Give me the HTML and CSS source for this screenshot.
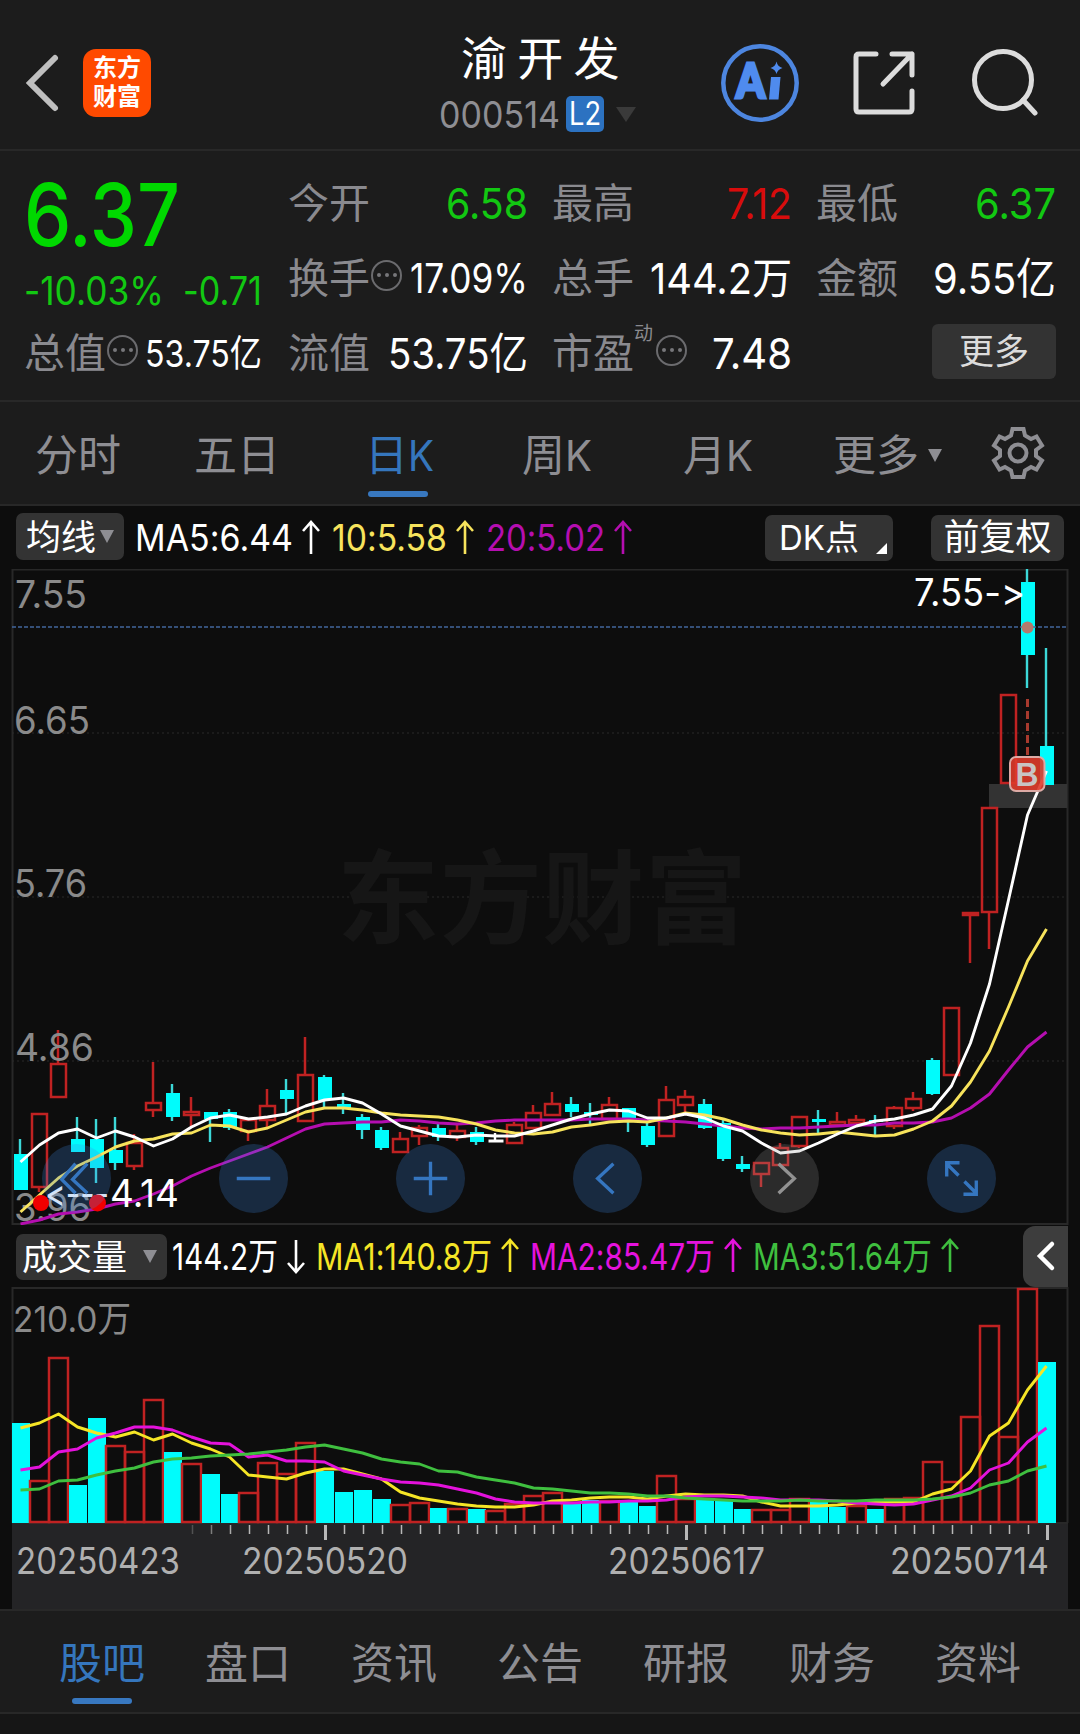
FILE: index.html
```html
<!DOCTYPE html>
<html lang="zh-CN">
    <head>
        <meta charset="UTF-8" />
        <meta name="viewport" content="width=device-width, initial-scale=1.0" />
        <title>渝开发 000514</title>
        <link rel="stylesheet" href="styles.css">
    </head>
    <body>
        <header class="header">
            <svg class="back" width="36" height="60" viewBox="0 0 36 60">
                <path d="M31 5L6 30L31 55" />
            </svg>
            <div class="logo">东方<br>财富</div>
            <div class="stock">
                <h1>渝 开 发</h1>
                <div class="code">
                    <span data-w="121">000514</span>
                    <b class="l2"><span data-w="32">L2</span></b>
                    <i class="caret"></i>
                </div>
            </div>
            <div class="tools">
                <svg class="ai" width="80" height="80" viewBox="0 0 80 80">
                    <circle cx="40" cy="40" r="36.7" />
                    <text x="16" y="54.5" textLength="29" lengthAdjust="spacingAndGlyphs">A</text>
                    <path d="M51 34H60.500L58.500 56.500H49Z" />
                    <path d="M56.500 18.500Q57.500 23.500 62.500 25Q57.500 26.500 56.500 31Q55.500 26.500 50.500 25Q55.500 23.500 56.500 18.500Z" />
                </svg>
                <svg class="line" width="66" height="68" viewBox="0 0 66 68">
                    <path d="M24 5H7Q4 5 4 8V60Q4 63 7 63H57Q60 63 60 60V42M40 5H60V26M60 5L31 35" />
                </svg>
                <svg class="line" width="68" height="68" viewBox="0 0 68 68">
                    <circle cx="33" cy="31" r="28.500" />
                    <path d="M53 51L65 64" />
                </svg>
            </div>
        </header>

        <section class="quote">
            <div class="price"><span data-w="156">6.37</span></div>
            <div class="change">
                <span data-w="140">-10.03%</span>
                <span data-w="79">-0.71</span>
            </div>
            <div class="cell total"><label>总值</label><i class="tip"></i><span class="small" data-w="117">53.75亿</span></div>

            <div class="cell c2"><label>今开</label><span class="down" data-w="82">6.58</span></div>
            <div class="cell c3"><label>最高</label><span class="up" data-w="65">7.12</span></div>
            <div class="cell c4"><label>最低</label><span class="down" data-w="81">6.37</span></div>

            <div class="cell c2 r2"><label>换手</label><i class="tip"></i><span class="mid" data-w="118">17.09%</span></div>
            <div class="cell c3 r2"><label>总手</label><span data-w="142">144.2万</span></div>
            <div class="cell c4 r2"><label>金额</label><span data-w="123">9.55亿</span></div>

            <div class="cell c2 r3"><label>流值</label><span data-w="140">53.75亿</span></div>
            <div class="cell c3 r3"><label>市盈</label><sup>动</sup><i class="tip"></i><span data-w="80">7.48</span></div>
            <div class="cell c4 r3"><button class="more">更多</button></div>
        </section>

        <nav class="period">
            <a>分时</a>
            <a>五日</a>
            <a class="active">日<span data-w="26">K</span></a>
            <a>周<span data-w="27">K</span></a>
            <a>月<span data-w="27">K</span></a>
            <a>更多<i class="caret"></i></a>
            <svg class="gear" width="56" height="56" viewBox="-28 -28 56 56">
                <path d="M-5.500-24H5.500L7-17.500 13-14 18.500-16.500 24-7.500 18-3V3L24 7.500 18.500 16.500 13 14 7 17.500 5.500 24H-5.500L-7 17.500-13 14-18.500 16.500-24 7.500-18 3V-3L-24-7.500-18.500-16.500-13-14-7-17.500Z" />
                <circle r="8.500" />
            </svg>
        </nav>

        <div class="legend">
            <button class="pick">均线<i class="caret"></i></button>
            <span class="white" data-w="158">MA5:6.44</span>
            <svg class="arrow white"><path d="M10 35V3M2 12L10 3L18 12" /></svg>
            <span class="yellow" data-w="115">10:5.58</span>
            <svg class="arrow yellow"><path d="M10 35V3M2 12L10 3L18 12" /></svg>
            <span class="purple" data-w="119">20:5.02</span>
            <svg class="arrow purple"><path d="M10 35V3M2 12L10 3L18 12" /></svg>
            <button class="dk"><span data-w="46">DK</span>点</button>
            <button class="fq">前复权</button>
        </div>

        <div class="kline">
            <svg id="kline" width="1080" height="656" viewBox="0 569 1080 656">
                <g class="grid">
                    <path class="frame" d="M12.500 569V1225M1067.500 569V1225M12 569.500H1068M12 1224H1068" />
                    <path class="dots" d="M12 733H1068M12 897H1068M12 1061H1068" />
                </g>
                <text class="watermark" x="337" y="936" textLength="410">东方财富</text>
                <rect class="gap" x="989" y="784" width="78" height="24" />
                <g id="candles"></g>
                <g class="axis">
                    <text x="15" y="608" textLength="72" lengthAdjust="spacingAndGlyphs">7.55</text>
                    <text x="14" y="734" textLength="76" lengthAdjust="spacingAndGlyphs">6.65</text>
                    <text x="14" y="897" textLength="73" lengthAdjust="spacingAndGlyphs">5.76</text>
                    <text x="15" y="1061" textLength="79" lengthAdjust="spacingAndGlyphs">4.86</text>
                    <text x="14" y="1221" textLength="77" lengthAdjust="spacingAndGlyphs">3.96</text>
                </g>
                <g id="ma"></g>
                <path class="last" d="M12 627H1068" />
                <g class="mark">
                    <text x="914" y="606" textLength="111" lengthAdjust="spacingAndGlyphs">7.55-&gt;</text>
                    <text x="45" y="1207" textLength="64" lengthAdjust="spacingAndGlyphs">&lt;---</text>
                    <text x="110" y="1207" textLength="69" lengthAdjust="spacingAndGlyphs">4.14</text>
                </g>
                <circle class="red-dot" cx="41" cy="1203" r="8" />
                <circle class="red-dot" cx="97.500" cy="1203" r="8.500" />
                <circle class="pos" cx="1027.500" cy="627.500" r="6" />
                <path class="buy-line" d="M1027.500 699V757" />
                <rect class="buy" x="1010" y="757" width="34.500" height="34" rx="6" />
                <text class="buy-text" x="1015.500" y="786" textLength="23" lengthAdjust="spacingAndGlyphs">B</text>
            </svg>
            <div class="controls">
                <button><svg viewBox="-35 -35 70 70"><path d="M-1-15L-15 1L-1 15M11-15L-4 1L11 15" /></svg></button>
                <button><svg viewBox="-35 -35 70 70"><path d="M-17 0H17" /></svg></button>
                <button><svg viewBox="-35 -35 70 70"><path d="M-17 0H17M0-17V17" /></svg></button>
                <button><svg viewBox="-35 -35 70 70"><path d="M6-15L-10 0L6 15" /></svg></button>
                <button class="off"><svg viewBox="-35 -35 70 70"><path d="M-6-15L10 0L-6 15" /></svg></button>
                <button><svg viewBox="-35 -35 70 70"><path d="M-2-16H-15V-2M-15-15L-3-3M2 16H15V2M15 15L3 3" /></svg></button>
            </div>
        </div>

        <div class="legend vol">
            <button class="pick">成交量<i class="caret"></i></button>
            <span class="white" data-w="106">144.2万</span>
            <svg class="arrow white"><path d="M10 3V35M2 26L10 35L18 26" /></svg>
            <span class="bright" data-w="176">MA1:140.8万</span>
            <svg class="arrow bright"><path d="M10 35V3M2 12L10 3L18 12" /></svg>
            <span class="pink" data-w="185">MA2:85.47万</span>
            <svg class="arrow pink"><path d="M10 35V3M2 12L10 3L18 12" /></svg>
            <span class="green" data-w="179">MA3:51.64万</span>
            <svg class="arrow green"><path d="M10 35V3M2 12L10 3L18 12" /></svg>
            <button class="drawer"><svg width="20" height="32" viewBox="0 0 20 32"><path d="M16 4L4 16L16 28" /></svg></button>
        </div>

        <svg id="volume" class="volume" width="1080" height="322" viewBox="0 1287 1080 322">
            <rect class="strip" x="12" y="1524" width="1056" height="85" />
            <path class="frame" d="M12.500 1287V1523M1067.500 1287V1523M12 1288H1068M12 1523H1068" />
            <g class="axis">
                <text x="13" y="1332" textLength="118" lengthAdjust="spacingAndGlyphs">210.0万</text>
            </g>
            <g id="bars"></g>
            <g id="volMa"></g>
            <g id="ticks"></g>
            <g class="dates">
                <text x="16" y="1574" textLength="164" lengthAdjust="spacingAndGlyphs">20250423</text>
                <text x="242" y="1574" textLength="166" lengthAdjust="spacingAndGlyphs">20250520</text>
                <text x="608" y="1574" textLength="157" lengthAdjust="spacingAndGlyphs">20250617</text>
                <text x="890" y="1574" textLength="159" lengthAdjust="spacingAndGlyphs">20250714</text>
            </g>
        </svg>

        <nav class="bottom">
            <a class="active">股吧</a>
            <a>盘口</a>
            <a>资讯</a>
            <a>公告</a>
            <a>研报</a>
            <a>财务</a>
            <a>资料</a>
        </nav>

        <script>
            var STEP = 19
            var X0 = 21

            // 涨跌, 最高, 实体上沿, 实体下沿, 最低, 成交量上沿, 量柱颜色(与K线不同时)
            var days = [
                ['d', 1139, 1154, 1190, 1190, 1423], ['u', 1113, 1113, 1188, 1192, 1480],
                ['u', 1030, 1063, 1098, 1098, 1357], ['d', 1117, 1139, 1152, 1152, 1485],
                ['d', 1119, 1139, 1168, 1183, 1418], ['d', 1117, 1150, 1163, 1170, 1445, 'u'],
                ['u', 1134, 1142, 1167, 1170, 1451], ['u', 1062, 1102, 1111, 1117, 1399],
                ['d', 1084, 1093, 1117, 1121, 1452], ['u', 1097, 1111, 1116, 1126, 1463],
                ['d', 1112, 1112, 1119, 1142, 1474], ['d', 1109, 1112, 1128, 1130, 1494],
                ['u', 1119, 1119, 1132, 1141, 1492], ['u', 1089, 1105, 1121, 1127, 1462],
                ['d', 1079, 1090, 1099, 1113, 1473, 'u'], ['u', 1037, 1074, 1122, 1122, 1442],
                ['d', 1075, 1077, 1100, 1108, 1471], ['d', 1093, 1104, 1108, 1114, 1492],
                ['d', 1114, 1117, 1130, 1139, 1490], ['d', 1127, 1130, 1148, 1150, 1499],
                ['u', 1132, 1138, 1153, 1153, 1504], ['u', 1125, 1127, 1137, 1145, 1502],
                ['d', 1124, 1128, 1137, 1141, 1508], ['u', 1125, 1130, 1138, 1141, 1508],
                ['d', 1127, 1132, 1142, 1145, 1509], ['e', 1133, 1140, 1142, 1142, 1510],
                ['u', 1122, 1124, 1144, 1144, 1503], ['u', 1105, 1112, 1129, 1129, 1495],
                ['u', 1092, 1103, 1116, 1116, 1492], ['d', 1097, 1104, 1112, 1117, 1504],
                ['d', 1103, 1112, 1115, 1125, 1500], ['u', 1097, 1104, 1120, 1120, 1500],
                ['d', 1108, 1108, 1120, 1132, 1501], ['d', 1122, 1126, 1145, 1147, 1506],
                ['u', 1086, 1099, 1137, 1137, 1475], ['u', 1090, 1096, 1106, 1113, 1498],
                ['d', 1099, 1104, 1128, 1129, 1500], ['d', 1120, 1123, 1159, 1161, 1501],
                ['d', 1156, 1164, 1169, 1172, 1509], ['u', 1162, 1162, 1175, 1187, 1509],
                ['u', 1143, 1147, 1166, 1166, 1509], ['u', 1116, 1116, 1147, 1148, 1498],
                ['d', 1110, 1119, 1122, 1133, 1502], ['u', 1112, 1121, 1126, 1126, 1507, 'd'],
                ['u', 1115, 1119, 1124, 1126, 1505], ['d', 1115, 1120, 1122, 1136, 1509],
                ['u', 1106, 1107, 1127, 1129, 1498], ['u', 1092, 1098, 1109, 1111, 1497],
                ['d', 1058, 1060, 1094, 1095, 1461, 'u'], ['u', 1007, 1007, 1076, 1076, 1481],
                ['u', 912, 912, 916, 963, 1416], ['u', 807, 807, 913, 949, 1325],
                ['u', 694, 694, 784, 784, 1436], ['d', 569, 582, 655, 688, 1288, 'u'],
                ['d', 648, 746, 785, 785, 1362]
            ]

            var ma = {
                purple: [1224, 1220, 1214, 1212, 1209, 1204, 1201, 1194, 1186, 1176, 1168, 1161, 1154, 1147, 1138, 1129, 1124, 1123, 1122, 1122, 1120, 1121, 1123, 1124, 1123, 1121, 1120, 1120, 1120, 1120, 1119, 1119, 1119, 1120, 1121, 1122, 1124, 1126, 1128, 1129, 1128, 1128, 1127, 1126, 1125, 1125, 1123, 1123, 1122, 1118, 1108, 1094, 1070, 1047, 1032],
                yellow: [1212, 1195, 1178, 1166, 1157, 1147, 1141, 1139, 1134, 1133, 1125, 1126, 1132, 1128, 1120, 1112, 1108, 1108, 1110, 1113, 1115, 1116, 1117, 1120, 1124, 1130, 1133, 1134, 1132, 1127, 1125, 1122, 1121, 1122, 1118, 1113, 1115, 1119, 1125, 1130, 1133, 1135, 1134, 1132, 1134, 1136, 1135, 1129, 1121, 1106, 1082, 1051, 1007, 961, 929],
                white: [1162, 1145, 1133, 1129, 1138, 1131, 1137, 1146, 1139, 1127, 1118, 1115, 1119, 1117, 1114, 1106, 1100, 1098, 1103, 1114, 1126, 1131, 1136, 1137, 1135, 1136, 1136, 1131, 1125, 1119, 1114, 1110, 1111, 1118, 1118, 1114, 1118, 1126, 1131, 1143, 1153, 1151, 1143, 1134, 1126, 1121, 1119, 1115, 1109, 1086, 1043, 984, 900, 815, 771]
            }

            var volMa = {
                bright: [1428, 1423, 1414, 1427, 1433, 1437, 1432, 1440, 1434, 1443, 1449, 1457, 1475, 1477, 1479, 1473, 1469, 1469, 1474, 1479, 1492, 1498, 1501, 1504, 1506, 1507, 1507, 1505, 1501, 1500, 1498, 1497, 1497, 1499, 1496, 1494, 1495, 1495, 1496, 1502, 1506, 1506, 1506, 1505, 1503, 1502, 1502, 1502, 1494, 1489, 1471, 1436, 1423, 1390, 1366],
                pink: [1470, 1467, 1452, 1449, 1438, 1433, 1427, 1427, 1430, 1437, 1443, 1444, 1457, 1455, 1461, 1461, 1462, 1471, 1475, 1479, 1482, 1483, 1485, 1489, 1493, 1499, 1502, 1503, 1503, 1503, 1502, 1502, 1501, 1501, 1500, 1497, 1496, 1496, 1497, 1498, 1500, 1500, 1500, 1501, 1503, 1504, 1505, 1504, 1500, 1496, 1488, 1470, 1463, 1442, 1428],
                green: [1490, 1489, 1481, 1480, 1475, 1471, 1468, 1462, 1459, 1458, 1456, 1455, 1454, 1452, 1450, 1447, 1445, 1449, 1453, 1459, 1462, 1464, 1471, 1472, 1477, 1480, 1483, 1488, 1489, 1491, 1493, 1493, 1494, 1496, 1496, 1498, 1499, 1500, 1501, 1501, 1501, 1500, 1501, 1501, 1501, 1500, 1500, 1500, 1499, 1497, 1493, 1485, 1481, 1471, 1466]
            }

            function add(parent, tag, attrs) {
                var el = document.createElementNS('http://www.w3.org/2000/svg', tag)
                for (var k in attrs) {
                    el.setAttribute(k, attrs[k])
                }
                document.getElementById(parent).appendChild(el)
            }

            function drawBox(parent, dir, x, w, top, bottom) {
                // 阳线空心，阴线实心
                if (dir === 'u') {
                    add(parent, 'rect', { class: 'up', x: x - w / 2 - 1, y: top + 1, width: w + 1, height: Math.max(bottom - top - 2, 2) })
                } else {
                    add(parent, 'rect', { class: dir === 'e' ? 'even' : 'down', x: x - w / 2, y: top, width: w, height: bottom - top })
                }
            }

            function drawLines(parent, lines) {
                for (var name in lines) {
                    var pts = lines[name].map(function(y, i) {
                        return X0 - 0.5 + STEP * i + ',' + y
                    })
                    add(parent, 'polyline', { class: name, points: pts.join(' ') })
                }
            }

            days.forEach(function(d, i) {
                var x = X0 + STEP * i
                var mid = x - 1
                var cls = { u: 'up', d: 'down', e: 'even' }[d[0]]
                add('candles', 'path', { class: cls, d: 'M' + mid + ' ' + d[1] + 'V' + d[2] + 'M' + mid + ' ' + d[3] + 'V' + d[4] })
                drawBox('candles', d[0], x, 14, d[2], d[3])

                var dir = d[6] || (d[0] === 'e' ? 'u' : d[0])
                drawBox('bars', dir, x, 18, d[5], 1523)

                if (i >= 9) {
                    var major = i === 16 || i === 35 || i === 54
                    add('ticks', 'path', {
                        d: 'M' + (x + 0.5) + ' 1525V' + (major ? 1540 : 1534),
                        'stroke-width': major ? 3 : 1.5,
                        opacity: Math.min(1, (i - 8) * 0.3)
                    })
                }
            })
            drawLines('ma', ma)
            drawLines('volMa', volMa)

            // 把文字压缩到指定宽度
            document.querySelectorAll('[data-w]').forEach(function(el) {
                var w = Number(el.dataset.w)
                var full = el.getBoundingClientRect().width
                el.style.transform = 'scaleX(' + w / full + ')'
                el.style.marginRight = w - full + 'px'
            })
        </script>
    </body>
</html>
```
FILE: styles.css
```css
* {
    box-sizing: border-box;
}
body {
    margin: 0;
    width: 1080px;
    height: 1734px;
    overflow: hidden;
    background: #0d0d0d;
    color: #fff;
    font-family: Inter, "Noto Sans CJK SC", sans-serif;
    font-feature-settings: "calt" 0;
}
button {
    padding: 0;
    border: none;
    color: #fff;
    font-family: inherit;
    background: #333;
}
svg {
    display: block;
    flex: none;
}
[data-w] {
    display: inline-block;
    flex: none;
    white-space: nowrap;
    transform-origin: 0 50%;
}
.caret {
    display: inline-block;
    flex: none;
    border: 7px solid transparent;
    border-top: 13px solid #8e8e93;
    border-bottom: 0;
}

/* 顶部 */
.header {
    display: grid;
    grid-template-columns: 59px 68px 1fr 351px;
    align-items: center;
    height: 151px;
    padding: 16px 35px 0 24px;
    background: #1c1c1c;
    border-bottom: 2px solid #282828;
}
.back path {
    fill: none;
    stroke: #bfbfbf;
    stroke-width: 6;
    stroke-linecap: round;
}
.logo {
    height: 68px;
    padding-top: 4px;
    border-radius: 13px;
    font-size: 24px;
    font-weight: bold;
    line-height: 29px;
    text-align: center;
    background: #ff4a00;
}
.stock {
    padding: 0 0 0 288px;
    margin-top: -1px;
}
.stock h1 {
    margin: 0 0 0 22px;
    font-size: 46px;
    font-weight: normal;
    line-height: 64px;
    white-space: nowrap;
    font-family: "Noto Sans CJK SC", sans-serif;
}
.code {
    display: flex;
    align-items: center;
    height: 55px;
    color: #8e8e93;
    font-size: 37px;
}
.l2 {
    width: 38px;
    height: 36px;
    margin-left: 6px;
    padding-left: 3px;
    border-radius: 5px;
    font-size: 32px;
    font-weight: normal;
    line-height: 36px;
    color: #fff;
    background: #2c72c1;
}
.code .caret {
    margin-left: 12px;
    border-width: 15px 10px 0;
    border-top-color: #3a3a3a;
}
.tools {
    display: flex;
    align-items: center;
    gap: 52px;
    padding-left: 26px;
}
.ai circle {
    fill: none;
    stroke: #4d86e0;
    stroke-width: 4.5;
}
.ai text {
    font: 900 47px Lato, sans-serif;
    stroke: #4f8bee;
    stroke-width: 3;
}
.ai text,
.ai path {
    fill: #4f8bee;
}
.line {
    fill: none;
    stroke: #dcdcdc;
    stroke-width: 5;
    stroke-linecap: round;
    stroke-linejoin: round;
}

/* 行情 */
.quote {
    display: grid;
    grid-template-columns: repeat(4, 238px);
    grid-template-rows: repeat(3, 75px);
    column-gap: 26px;
    height: 251px;
    padding: 15px 24px 0;
    background: #1c1c1c;
    border-bottom: 2px solid #282828;
}
.price {
    grid-area: 1 / 1;
    color: #00d800;
    font-size: 86px;
    font-weight: 500;
    line-height: 99px;
}
.change {
    grid-area: 2 / 1;
    display: flex;
    justify-content: space-between;
    align-items: center;
    padding-top: 23px;
    color: #12c812;
    font-size: 39px;
}
.cell {
    display: flex;
    align-items: center;
    font-size: 43px;
    line-height: 73px;
}
.total { grid-area: 3 / 1; }
.c2 { grid-column: 2; }
.c3 { grid-column: 3; }
.c4 { grid-column: 4; }
.r2 { grid-row: 2; }
.r3 { grid-row: 3; }
.c2:not(.r2):not(.r3),
.c3:not(.r2):not(.r3),
.c4:not(.r2):not(.r3) {
    grid-row: 1;
}
.cell label {
    flex: none;
    font-size: 41px;
    color: #8a8a8f;
    line-height: 75px;
    margin-top: -1px;
}
.cell > [data-w],
.cell .more {
    order: 2;
    position: relative;
    left: 2px;
}
.cell::after {
    content: "";
    flex: 1;
    order: 1;
}
.cell .small {
    left: 0;
    font-size: 37px;
}
.cell .mid { font-size: 41px; }
.cell .down { color: #12c812; }
.cell .up { color: #d80c0c; }
.cell sup {
    align-self: flex-start;
    margin-top: 6px;
    font-size: 19px;
    line-height: 24px;
    color: #8a8a8f;
}
.tip {
    position: relative;
    flex: none;
    width: 31px;
    height: 31px;
    margin: -7px 0 0 1px;
    border: 2px solid #6b6b6e;
    border-radius: 50%;
}
sup + .tip { margin-left: 3px; }
.tip::after {
    content: "";
    position: absolute;
    left: 4px;
    top: 11px;
    width: 4px;
    height: 4px;
    border-radius: 50%;
    background: #77777a;
    box-shadow: 8px 0 #77777a, 16px 0 #77777a;
}
.more {
    width: 124px;
    height: 55px;
    margin-top: -5px;
    border-radius: 6px;
    font-size: 35px;
    line-height: 50px;
    color: #dcdcdc;
}

/* 周期 */
.period {
    display: grid;
    grid-template-columns: 159px 171px 157px 161px 150px 157px 56px;
    align-items: center;
    height: 104px;
    padding-left: 35px;
    background: #1c1c1c;
    border-bottom: 2px solid #282828;
}
.period a,
.bottom a {
    position: relative;
    font-size: 43px;
    color: #8e8e93;
    white-space: nowrap;
}
.period a {
    line-height: 106px;
    height: 102px;
}
.period .caret {
    margin-left: 9px;
    vertical-align: 9px;
}
.period .active,
.bottom .active {
    color: #3576bd;
}
.period .active::after,
.bottom .active::after {
    content: "";
    position: absolute;
    left: 3px;
    bottom: 7px;
    width: 60px;
    height: 6px;
    border-radius: 3px;
    background: #3878c0;
}
.gear {
    fill: none;
    stroke: #8e8e93;
    stroke-width: 4;
}

/* 均线图例 */
.legend {
    display: flex;
    align-items: center;
    height: 63px;
    padding: 0 16px 0 16px;
    font-size: 37px;
    line-height: 60px;
}
.pick {
    display: flex;
    align-items: center;
    width: 108px;
    height: 47px;
    margin: -2px 11px 0 0;
    padding-left: 10px;
    border-radius: 7px;
    font-size: 35px;
    line-height: 44px;
}
.pick .caret { margin-left: 4px; }
.arrow {
    width: 20px;
    height: 38px;
    margin: 0 11px 0 8px;
}
.arrow path {
    fill: none;
    stroke: currentColor;
    stroke-width: 2.6;
}
.white { color: #fff; }
.yellow { color: #f7e35c; }
.purple { color: #b50eb0; }
.bright { color: #f5e526; }
.pink { color: #e412dc; }
.green { color: #3fbf3f; }
.dk,
.fq {
    position: relative;
    height: 46px;
    border-radius: 7px;
    font-size: 34px;
    line-height: 45px;
    white-space: nowrap;
}
.dk {
    width: 128px;
    margin-left: auto;
    padding-left: 14px;
    text-align: left;
}
.dk::after {
    content: "";
    position: absolute;
    right: 6px;
    bottom: 7px;
    border-left: 11px solid transparent;
    border-bottom: 11px solid #fff;
}
.fq {
    width: 133px;
    margin-left: 38px;
    font-size: 36px;
}

/* K线 */
.kline {
    position: relative;
    height: 656px;
}
.frame {
    fill: none;
    stroke: #282828;
    stroke-width: 2;
}
.dots {
    stroke: #2b2b2b;
    stroke-dasharray: 2 3;
}
.last {
    stroke: #41659c;
    stroke-width: 1.4;
    stroke-dasharray: 4 2;
}
.watermark {
    fill: #161616;
    font: bold 102px "Noto Sans CJK SC", sans-serif;
}
.axis text {
    fill: #8a8a8a;
    font-size: 38px;
}
.volume .axis text { font-size: 36px; }
.mark text {
    fill: #fff;
    font-size: 38px;
}
.gap { fill: #333; }
#candles path {
    fill: none;
    stroke-width: 2.4;
}
#candles .up,
#bars .up {
    fill: none;
    stroke: #c02222;
    stroke-width: 2.5;
}
#candles .down { stroke: #3cd8d8; }
#candles rect.down,
#bars .down {
    fill: #00fcfc;
    stroke: none;
}
#candles .even {
    fill: #fff;
    stroke: #fff;
}
#ma polyline,
#volMa polyline {
    fill: none;
    stroke: currentColor;
    stroke-width: 2.9;
    stroke-linejoin: round;
}
.red-dot { fill: #f00000; }
.pos { fill: #b47a6c; }
.buy-line {
    stroke: #a83a2e;
    stroke-width: 3;
    stroke-dasharray: 8 4;
}
.buy {
    fill: rgba(222, 58, 42, 0.9);
    stroke: #dcaaa5;
    stroke-width: 2;
}
.buy-text {
    fill: #c8c4c4;
    font: bold 34px "Liberation Sans", sans-serif;
}
.controls {
    position: absolute;
    left: 42px;
    top: 575px;
    display: flex;
    gap: 108px;
}
.controls button {
    width: 69px;
    height: 69px;
    border-radius: 50%;
    background: rgba(62, 138, 230, 0.24);
}
.controls .off { background: rgba(150, 150, 150, 0.22); }
.controls path {
    fill: none;
    stroke: #3576c0;
    stroke-width: 3.4;
}
.controls .off path { stroke: #929292; }

/* 成交量 */
.legend.vol {
    height: 62px;
    padding-right: 12px;
}
.vol .pick {
    width: 151px;
    height: 46px;
    margin: 1px 5px 0 0;
    padding-left: 6px;
}
.vol .pick .caret { margin-left: 16px; }
.vol .arrow { margin: 0 10px 0 8px; }
.vol [data-w] { margin-top: 2px; }
.drawer {
    display: flex;
    align-items: center;
    justify-content: center;
    width: 45px;
    height: 61px;
    margin-left: auto;
    border-radius: 12px 0 0 12px;
    background: #3d3d3d;
}
.drawer path {
    fill: none;
    stroke: #fff;
    stroke-width: 4.5;
    stroke-linecap: round;
}
.strip { fill: #242426; }
#ticks path { stroke: #b8b8b8; }
.dates text {
    fill: #b0b0b0;
    font-size: 37px;
}

/* 底部 */
.bottom {
    display: flex;
    gap: 60px;
    height: 125px;
    padding-left: 59px;
    background: linear-gradient(#282828 2px, #1c1c1c 2px, #1c1c1c 103px, #282828 103px, #282828 105px, #161616 105px);
}
.bottom a {
    height: 103px;
    line-height: 109px;
}
.bottom .active::after {
    left: 13px;
    bottom: 8px;
}
```
